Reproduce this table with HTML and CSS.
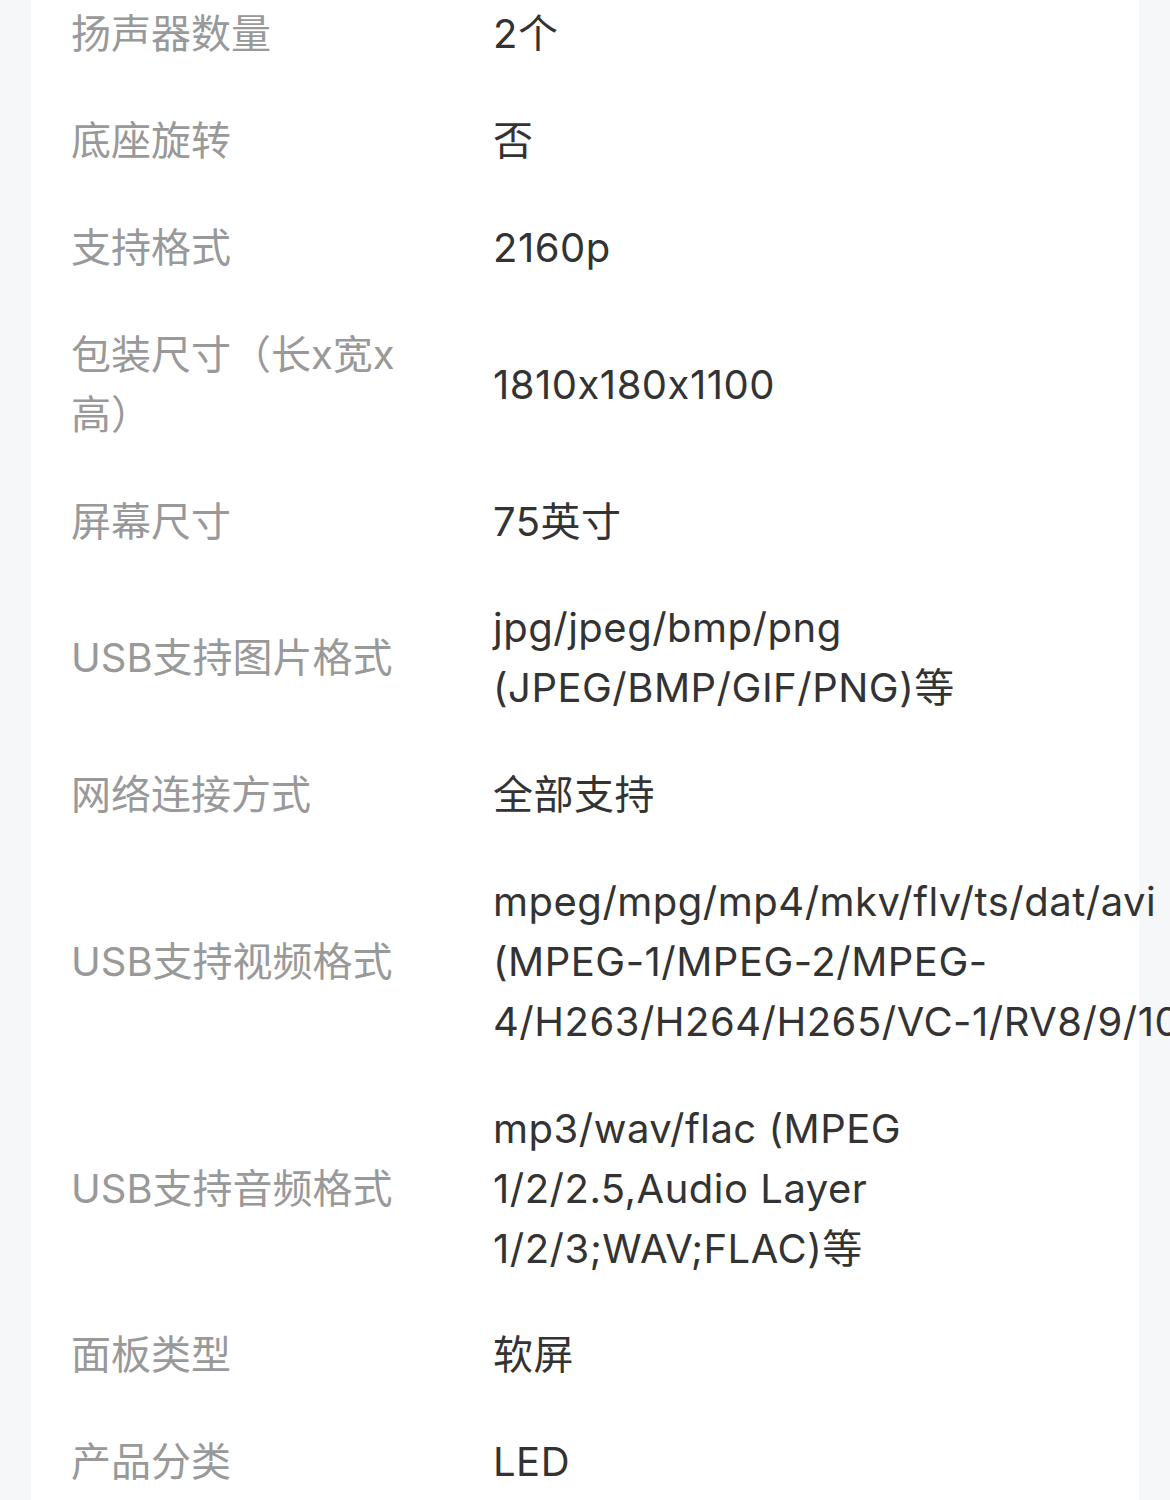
FILE: index.html
```html
<!DOCTYPE html>
<html lang="zh-CN">

<head>
    <meta charset="UTF-8">
    <meta name="viewport" content="width=device-width, initial-scale=1.0">
    <title>规格参数</title>
    <link rel="stylesheet" href="styles.css">
</head>

<body>
    <div class="page">
        <div class="spec-card">
            <div class="spec-row">
                <div class="spec-label">扬声器数量</div>
                <div class="spec-value">2个</div>
            </div>
            <div class="spec-row">
                <div class="spec-label">底座旋转</div>
                <div class="spec-value">否</div>
            </div>
            <div class="spec-row">
                <div class="spec-label">支持格式</div>
                <div class="spec-value">2160p</div>
            </div>
            <div class="spec-row">
                <div class="spec-label">包装尺寸（长x宽x高）</div>
                <div class="spec-value">1810x180x1100</div>
            </div>
            <div class="spec-row">
                <div class="spec-label">屏幕尺寸</div>
                <div class="spec-value">75英寸</div>
            </div>
            <div class="spec-row">
                <div class="spec-label">USB支持图片格式</div>
                <div class="spec-value">jpg/jpeg/bmp/png<br>(JPEG/BMP/GIF/PNG)等</div>
            </div>
            <div class="spec-row">
                <div class="spec-label">网络连接方式</div>
                <div class="spec-value">全部支持</div>
            </div>
            <div class="spec-row">
                <div class="spec-label">USB支持视频格式</div>
                <div class="spec-value">mpeg/mpg/mp4/mkv/flv/ts/dat/avi<br>(MPEG-1/MPEG-2/MPEG-<br>4/H263/H264/H265/VC-1/RV8/9/10)等</div>
            </div>
            <div class="spec-row">
                <div class="spec-label">USB支持音频格式</div>
                <div class="spec-value">mp3/wav/flac (MPEG<br>1/2/2.5,Audio Layer<br>1/2/3;WAV;FLAC)等</div>
            </div>
            <div class="spec-row">
                <div class="spec-label">面板类型</div>
                <div class="spec-value">软屏</div>
            </div>
            <div class="spec-row">
                <div class="spec-label">产品分类</div>
                <div class="spec-value">LED</div>
            </div>
        </div>
    </div>
</body>

</html>
```

FILE: styles.css
```css
html,
body {
    overflow: hidden;
}

body {
    margin: 0;
    padding: 0;
    background-color: #f6f7f9;
    font-family: Inter, "Noto Sans CJK SC", sans-serif;
    font-feature-settings: "calt" 0;
}

.page {
    padding: 0 31px;
}

.spec-card {
    margin-top: -19px;
    padding: 0 40px;
    background-color: #fff;
}

.spec-row {
    display: flex;
    align-items: center;
    padding: 23.4px 0;
    font-size: 40px;
    line-height: 60px;
}

.spec-label {
    flex: 0 0 350px;
    margin-right: 72px;
    color: #999;
}

.spec-value {
    flex: 1;
    color: #333;
    white-space: nowrap;
    letter-spacing: 0.5px;
}
```
